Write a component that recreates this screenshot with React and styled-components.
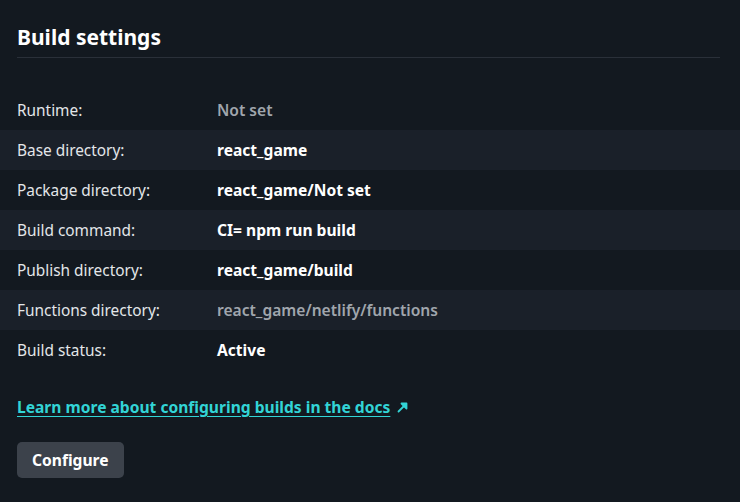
import React from "react";
import styled, { createGlobalStyle } from "styled-components";

const GlobalStyle = createGlobalStyle`
  body {
    margin: 0;
    background: #131920;
    font-family: "Noto Sans", "Open Sans", sans-serif;
  }
`;

const Page = styled.div`
  width: 740px;
  min-height: 502px;
  background: #131920;
  color: #e6e8ea;
`;

const Header = styled.div`
  margin: 0 20px 0 17px;
  padding: 24px 0 7px;
  border-bottom: 1px solid #2a3039;
`;

const Title = styled.h2`
  margin: 0;
  font-size: 21px;
  line-height: 26px;
  font-weight: 700;
  color: #ffffff;
`;

const List = styled.dl`
  margin: 32px 0 0;
`;

const Row = styled.div`
  display: flex;
  align-items: center;
  height: 40px;
  padding-left: 17px;
  background: ${(p) => (p.$striped ? "#1a2029" : "transparent")};
`;

const Label = styled.dt`
  width: 200px;
  font-size: 15.4px;
  color: #e3e6e9;
`;

const Value = styled.dd`
  margin: 0;
  font-size: 15.6px;
  font-weight: ${(p) => (p.$muted ? 600 : 700)};
  color: ${(p) => (p.$muted ? "#a0a6ad" : "#ffffff")};
`;

const Footer = styled.div`
  padding: 26px 17px 0;
  display: flex;
  flex-direction: column;
  align-items: flex-start;
  gap: 24px;
`;

const DocLink = styled.a`
  font-size: 15.6px;
  line-height: 22px;
  font-weight: 700;
  color: #32d4d6;
  text-decoration: none;
  display: flex;
  align-items: center;
  gap: 7px;
`;

const LinkText = styled.span`
  text-decoration: underline;
  text-underline-offset: 3px;
`;

const Button = styled.button`
  height: 36px;
  padding: 0 15px;
  border: none;
  border-radius: 5px;
  background: #3c424b;
  color: #ffffff;
  font-family: inherit;
  font-size: 15.6px;
  font-weight: 700;
`;

const ArrowIcon = () => (
  <svg width="11" height="11" viewBox="0 0 11 11" fill="none" stroke="currentColor" strokeWidth="1.8" strokeLinecap="round" strokeLinejoin="round">
    <path d="M1.5 9.5 L8.5 2.5" />
    <path d="M4.5 1.5 H9.5 V6.5 Z" fill="currentColor" />
  </svg>
);

const rows = [
  ["Runtime:", "Not set", true],
  ["Base directory:", "react_game"],
  ["Package directory:", "react_game/Not set"],
  ["Build command:", "CI= npm run build"],
  ["Publish directory:", "react_game/build"],
  ["Functions directory:", "react_game/netlify/functions", true],
  ["Build status:", "Active"],
];

export default function App() {
  return (
    <>
      <GlobalStyle />
      <Page>
        <Header>
          <Title>Build settings</Title>
        </Header>
        <List>
          {rows.map(([label, value, muted], i) => (
            <Row key={label} $striped={i % 2 === 1}>
              <Label>{label}</Label>
              <Value $muted={muted}>{value}</Value>
            </Row>
          ))}
        </List>
        <Footer>
          <DocLink href="#">
            <LinkText>Learn more about configuring builds in the docs</LinkText>
            <ArrowIcon />
          </DocLink>
          <Button>Configure</Button>
        </Footer>
      </Page>
    </>
  );
}
